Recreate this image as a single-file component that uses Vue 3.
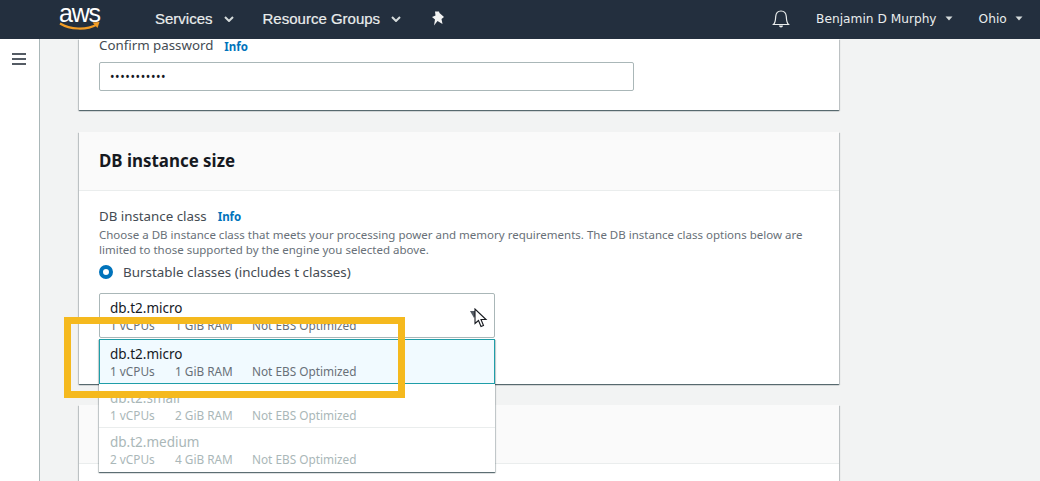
<script setup>
const options = [
  { name: "db.t2.micro", cpu: "1 vCPUs", ram: "1 GiB RAM", selected: true },
  { name: "db.t2.small", cpu: "1 vCPUs", ram: "2 GiB RAM" },
  { name: "db.t2.medium", cpu: "2 vCPUs", ram: "4 GiB RAM" },
];
</script>

<template>
  <div class="page">
    <header class="topbar">
      <div class="logo">
        <span class="logo-text">aws</span>
        <svg class="logo-smile" width="42" height="11" viewBox="0 0 42 11">
          <path d="M1 2.5 C11 8.5 27 9.5 38 3.5" stroke="#f29c25" stroke-width="2.2" fill="none" />
          <path d="M33.5 1.5 L40.5 1 L38.5 7" fill="#f29c25" />
        </svg>
      </div>
      <span class="nav-item services">Services</span>
      <svg class="nav-chev" width="10" height="6" viewBox="0 0 10 6">
        <path d="M1 1 L5 5 L9 1" stroke="#d5dbdb" stroke-width="2" fill="none" />
      </svg>
      <span class="nav-item groups">Resource Groups</span>
      <svg class="nav-chev" width="10" height="6" viewBox="0 0 10 6">
        <path d="M1 1 L5 5 L9 1" stroke="#d5dbdb" stroke-width="2" fill="none" />
      </svg>
      <svg class="pin" width="14" height="15" viewBox="0 0 14 15">
        <path d="M4 0.5 L8 0.5 L8.5 2 L13 6 L10.5 8 L11.5 13 L6.5 10 L3 14.5 L4 8.5 L1 6 L4.5 4.5 Z" fill="#f2f3f3" />
      </svg>
      <svg class="bell" width="18" height="20" viewBox="0 0 18 20">
        <path
          d="M1.5 15.5 C3.5 13.5 3.5 11 3.7 7.5 C4 4 6 2 9 2 C12 2 14 4 14.3 7.5 C14.5 11 14.5 13.5 16.5 15.5 Z"
          stroke="#eaeded"
          stroke-width="1.2"
          fill="none"
        />
        <path d="M7 16.5 C7 19 11 19 11 16.5 Z" fill="#eaeded" />
      </svg>
      <span class="user">Benjamin D Murphy</span>
      <svg class="small-chev" width="8" height="5" viewBox="0 0 8 5">
        <path d="M0.5 0.5 L7.5 0.5 L4 4.5 Z" fill="#d5dbdb" />
      </svg>
      <span class="region">Ohio</span>
      <svg class="small-chev" width="8" height="5" viewBox="0 0 8 5">
        <path d="M0.5 0.5 L7.5 0.5 L4 4.5 Z" fill="#d5dbdb" />
      </svg>
    </header>

    <div class="body">
      <aside class="sidebar">
        <div class="burger"><i></i><i></i><i></i></div>
      </aside>

      <main class="content">
        <section class="card card-password">
          <div class="label-row">
            <span class="label">Confirm password</span>
            <a class="info">Info</a>
          </div>
          <div class="input">•••••••••••</div>
        </section>

        <section class="card card-size">
          <div class="card-head">
            <h2>DB instance size</h2>
          </div>
          <div class="card-body">
            <div class="label-row">
              <span class="label">DB instance class</span>
              <a class="info">Info</a>
            </div>
            <p class="desc">
              Choose a DB instance class that meets your processing power and memory requirements. The DB instance class
              options below are limited to those supported by the engine you selected above.
            </p>
            <div class="radio-row">
              <span class="radio"></span>
              <span class="radio-label">Burstable classes (includes t classes)</span>
            </div>
            <div class="select-wrap">
              <div class="select">
                <div class="opt-name">db.t2.micro</div>
                <div class="opt-meta">
                  <span class="cpu">1 vCPUs</span><span class="ram">1 GiB RAM</span><span>Not EBS Optimized</span>
                </div>
                <span class="caret"></span>
                <svg class="cursor" width="14" height="21" viewBox="0 0 14 21">
                  <path
                    d="M1 1 L1 15.5 L4.5 12.5 L7 18.5 L9.5 17.5 L7 11.5 L12 11.5 Z"
                    fill="#fff"
                    stroke="#16191f"
                    stroke-width="1.1"
                  />
                </svg>
              </div>
              <ul class="dropdown">
                <li v-for="opt in options" :key="opt.name" class="option" :class="{ selected: opt.selected }">
                  <div class="opt-name">{{ opt.name }}</div>
                  <div class="opt-meta">
                    <span class="cpu">{{ opt.cpu }}</span><span class="ram">{{ opt.ram }}</span><span>Not EBS Optimized</span>
                  </div>
                </li>
              </ul>
            </div>
          </div>
        </section>

        <section class="card card-next">
          <div class="card-head"></div>
        </section>
      </main>
    </div>

    <div class="highlight"></div>
  </div>
</template>

<style scoped>
.page {
  position: relative;
  width: 1040px;
  height: 481px;
  overflow: hidden;
  background: #f2f3f3;
  font-family: "Noto Sans", "Open Sans", sans-serif;
  color: #16191f;
}

.topbar {
  display: flex;
  align-items: center;
  height: 39px;
  padding: 0 0 2px 59px;
  box-sizing: border-box;
  background: #232f3e;
  color: #f2f3f3;
}

.logo {
  position: relative;
  flex: none;
  width: 42px;
  height: 37px;
}

.logo-text {
  display: block;
  font-family: "Liberation Sans", Arial, sans-serif;
  font-size: 25px;
  line-height: 26px;
  letter-spacing: -1.2px;
  color: #fff;
}

.logo-smile {
  position: absolute;
  left: 0;
  top: 21px;
}

.nav-item {
  font-family: "Liberation Sans", Arial, sans-serif;
  font-size: 15px;
  color: #eaeded;
  -webkit-text-stroke: 0.2px #eaeded;
}

.services {
  margin-left: 54px;
}

.groups {
  margin-left: 29px;
}

.nav-chev {
  margin-left: 11px;
}

.pin {
  margin-left: 30px;
}

.bell {
  margin-left: 327px;
}

.user,
.region {
  font-family: "DejaVu Sans", Verdana, sans-serif;
  font-size: 12.2px;
  color: #eaeded;
}

.user {
  margin-left: 26px;
}

.region {
  margin-left: 26px;
}

.small-chev {
  margin-left: 8px;
}

.body {
  display: flex;
}

.sidebar {
  flex: none;
  width: 39px;
  height: 442px;
  background: #fff;
  border-right: 1px solid #aab7b8;
}

.burger {
  display: flex;
  flex-direction: column;
  gap: 3px;
  width: 14px;
  margin: 14px 0 0 12px;
}

.burger i {
  display: block;
  height: 2px;
  background: #545b64;
}

.content {
  width: 760px;
  margin-left: 39px;
}

.card {
  background: #fff;
  box-shadow: 0 1px 1px 0 rgba(0, 28, 36, 0.5), 1px 1px 1px 0 rgba(0, 28, 36, 0.15),
    -1px 1px 1px 0 rgba(0, 28, 36, 0.15);
}

.card-password {
  height: 71px;
  padding: 0 20px;
}

.label-row {
  display: flex;
  align-items: center;
  height: 14px;
}

.card-password .label-row {
  height: 12px;
}

.card-password .info {
  margin-top: 2px;
}

.label {
  font-size: 13.3px;
  line-height: 14px;
  color: #444b52;
}

.info {
  margin-left: 11px;
  font-size: 11.5px;
  font-weight: 700;
  color: #0073bb;
}

.input {
  display: flex;
  align-items: center;
  width: 535px;
  height: 29px;
  margin-top: 11px;
  padding-left: 10px;
  box-sizing: border-box;
  border: 1px solid #aab7b8;
  border-radius: 2px;
  font-size: 12px;
  letter-spacing: 0.6px;
  color: #16191f;
}

.card-size {
  height: 252px;
  margin-top: 22px;
}

.card-head {
  display: flex;
  align-items: center;
  height: 58px;
  padding: 0 20px;
  background: #fafafa;
  border-bottom: 1px solid #eaeded;
}

.card-head h2 {
  margin: 0 0 1px;
  font-size: 16.9px;
  font-weight: 700;
  color: #16191f;
}

.card-body {
  padding: 18px 20px 0;
}

.desc {
  margin: 4px 0 0;
  font-size: 11.5px;
  line-height: 15px;
  color: #687078;
}

.radio-row {
  display: flex;
  align-items: center;
  height: 16px;
  margin-top: 7px;
}

.radio {
  box-sizing: border-box;
  width: 14px;
  height: 14px;
  border: 4px solid #0073bb;
  border-radius: 50%;
  background: #fff;
}

.radio-label {
  margin-left: 10px;
  font-size: 13.4px;
  color: #444b52;
}

.select-wrap {
  position: relative;
  width: 396px;
  margin-top: 13px;
}

.select {
  position: relative;
  box-sizing: border-box;
  height: 45px;
  padding-left: 10px;
  border: 1px solid #aab7b8;
  border-radius: 2px;
  background: #fff;
}

.opt-name {
  font-size: 13.5px;
  line-height: 18px;
  padding-top: 5px;
  color: #16191f;
}

.opt-meta {
  display: flex;
  font-size: 11.8px;
  line-height: 16px;
  color: #687078;
}

.cpu {
  width: 65px;
}

.ram {
  width: 77px;
}

.caret {
  position: absolute;
  right: 16px;
  top: 17px;
  width: 0;
  height: 0;
  border-left: 4px solid transparent;
  border-right: 4px solid transparent;
  border-top: 7px solid #545b64;
}

.cursor {
  position: absolute;
  right: 6px;
  top: 14px;
}

.dropdown {
  position: absolute;
  left: 0;
  top: 46px;
  width: 396px;
  margin: 0;
  padding: 0;
  list-style: none;
  background: #fff;
  box-shadow: 0 1px 1px 0 rgba(0, 28, 36, 0.5), 1px 1px 1px 0 rgba(0, 28, 36, 0.15),
    -1px 1px 1px 0 rgba(0, 28, 36, 0.15);
}

.option {
  box-sizing: border-box;
  height: 44px;
  padding-left: 11px;
  border-bottom: 1px solid #eaeded;
}

.option:last-child {
  border-bottom: none;
}

.option:not(.selected) .opt-name,
.option:not(.selected) .opt-meta {
  color: #aab7b8;
}

.option.selected {
  height: 45px;
  background: #f1faff;
  border: 1px solid #1f9ea8;
  padding-left: 10px;
}

.card-next {
  height: 120px;
  margin-top: 21px;
}

.highlight {
  position: absolute;
  left: 64px;
  top: 317px;
  box-sizing: border-box;
  width: 341px;
  height: 81px;
  border: 7px solid #f5b91e;
}
</style>
